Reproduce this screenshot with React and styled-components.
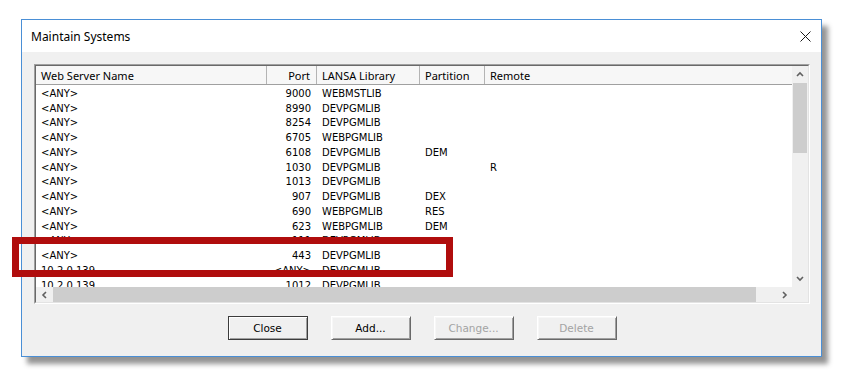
import React from 'react';
import styled, { createGlobalStyle } from 'styled-components';

const LIST_FONT = '"DejaVu Sans", "Liberation Sans", sans-serif';
const UI_FONT = '"Noto Sans", "Open Sans", sans-serif';
const COLUMNS = '231px 50px 103px 65px 1fr';
const ROW_HEIGHT = 14.75;

const GlobalStyle = createGlobalStyle`
  html, body {
    margin: 0;
    background: #ffffff;
  }
  body {
    width: 842px;
    height: 382px;
    overflow: hidden;
  }
`;

const Page = styled.div`
  position: relative;
  box-sizing: border-box;
  width: 842px;
  height: 382px;
  padding: 19px 0 0 21px;
`;

const Window = styled.div`
  box-sizing: border-box;
  width: 801px;
  height: 338px;
  border: 1px solid #4a8fd6;
  background: #f0f0f0;
  box-shadow: 6px 7px 5px rgba(0, 0, 0, 0.42);
  display: flex;
  flex-direction: column;
`;

const TitleBar = styled.div`
  height: 32px;
  flex: none;
  background: #ffffff;
  display: flex;
  align-items: center;
  justify-content: space-between;
  padding: 0 10px 0 9px;
`;

const Title = styled.span`
  font-family: ${UI_FONT};
  font-size: 12px;
  color: #000;
`;

const CloseGlyph = styled.svg`
  width: 11px;
  height: 11px;
  display: block;
`;

const Body = styled.div`
  flex: 1;
  padding: 12px 11px 0 12px;
  display: flex;
  flex-direction: column;
`;

const ListBox = styled.div`
  box-sizing: border-box;
  width: 776px;
  height: 240px;
  border: 1px solid;
  border-color: #a0a0a0 #ffffff #ffffff #a0a0a0;
`;

const ListFrame = styled.div`
  box-sizing: border-box;
  height: 100%;
  border: 1px solid;
  border-color: #696969 #e3e3e3 #e3e3e3 #696969;
  background: #ffffff;
  display: grid;
  grid-template-columns: 1fr 16px;
  grid-template-rows: 1fr 15px;
`;

const Content = styled.div`
  overflow: hidden;
  display: flex;
  flex-direction: column;
`;

const Header = styled.div`
  height: 19px;
  flex: none;
  box-sizing: border-box;
  display: grid;
  grid-template-columns: ${COLUMNS};
  background: #f7f7f7;
  border-bottom: 1px solid #a0a0a0;
`;

const HeaderCell = styled.div`
  display: flex;
  align-items: center;
  justify-content: ${p => (p.right ? 'flex-end' : 'flex-start')};
  padding: 0 ${p => (p.right ? '6px' : '5px')};
  border-right: ${p => (p.last ? 'none' : '1px solid #b4b4b4')};
  font-family: ${UI_FONT};
  font-size: 11px;
  color: #000;
  white-space: nowrap;
`;

const Rows = styled.div`
  padding-top: 1px;
`;

const Row = styled.div`
  height: ${ROW_HEIGHT}px;
  display: grid;
  grid-template-columns: ${COLUMNS};
  align-items: center;
`;

const Cell = styled.div`
  padding: 0 ${p => (p.right ? '6px' : '5px')};
  text-align: ${p => (p.right ? 'right' : 'left')};
  font-family: ${LIST_FONT};
  font-size: 10px;
  color: #000;
  white-space: nowrap;
  overflow: hidden;
`;

const VScroll = styled.div`
  background: #f0f0f0;
  display: flex;
  flex-direction: column;
`;

const HScroll = styled.div`
  background: #f0f0f0;
  display: flex;
  align-items: stretch;
`;

const Corner = styled.div`
  background: #f0f0f0;
`;

const ArrowButton = styled.div`
  flex: none;
  width: ${p => (p.horizontal ? '16px' : '100%')};
  height: ${p => (p.horizontal ? '100%' : '17px')};
  display: flex;
  align-items: center;
  justify-content: center;
`;

const VThumb = styled.div`
  margin: 0 1px;
  height: 70px;
  background: #cdcdcd;
`;

const HThumb = styled.div`
  margin: 0 18px 0 1px;
  width: 703px;
  background: #cdcdcd;
`;

const Spacer = styled.div`
  flex: 1;
`;

const ButtonRow = styled.div`
  display: flex;
  justify-content: center;
  gap: 23px;
  margin-top: 12px;
`;

const Button = styled.div`
  box-sizing: border-box;
  width: 80px;
  height: 24px;
  display: flex;
  align-items: center;
  justify-content: center;
  background: #f0f0f0;
  font-family: ${LIST_FONT};
  font-size: 10.5px;
  color: ${p => (p.disabled ? '#a3a3a3' : '#000')};
  border: 1px solid;
  border-color: ${p => (p.primary ? '#3c3c3c' : '#ffffff #696969 #696969 #ffffff')};
  box-shadow: ${p => (p.primary
    ? 'inset 1px 1px 0 #ffffff, inset -1px -1px 0 #a0a0a0'
    : 'inset 1px 1px 0 #f7f7f7, inset -1px -1px 0 #a0a0a0')};
`;

const Highlight = styled.div`
  position: absolute;
  left: 12px;
  top: 237px;
  width: 441px;
  height: 40px;
  box-sizing: border-box;
  border: 7px solid #b00d0d;
`;

const Chevron = ({ dir }) => {
  const paths = {
    up: 'M1 5 L4 2 L7 5',
    down: 'M1 2 L4 5 L7 2',
    left: 'M5 1 L2 4 L5 7',
    right: 'M2 1 L5 4 L2 7',
  };
  const vertical = dir === 'up' || dir === 'down';
  return (
    <svg width={vertical ? 8 : 7} height={vertical ? 7 : 8} viewBox={vertical ? '0 0 8 7' : '0 0 7 8'}>
      <path d={paths[dir]} fill="none" stroke="#606060" strokeWidth="1.6" />
    </svg>
  );
};

const rows = [
  ['<ANY>', '9000', 'WEBMSTLIB', '', ''],
  ['<ANY>', '8990', 'DEVPGMLIB', '', ''],
  ['<ANY>', '8254', 'DEVPGMLIB', '', ''],
  ['<ANY>', '6705', 'WEBPGMLIB', '', ''],
  ['<ANY>', '6108', 'DEVPGMLIB', 'DEM', ''],
  ['<ANY>', '1030', 'DEVPGMLIB', '', 'R'],
  ['<ANY>', '1013', 'DEVPGMLIB', '', ''],
  ['<ANY>', '907', 'DEVPGMLIB', 'DEX', ''],
  ['<ANY>', '690', 'WEBPGMLIB', 'RES', ''],
  ['<ANY>', '623', 'WEBPGMLIB', 'DEM', ''],
  ['<ANY>', '111', 'DEVPGMLIB', '', ''],
  ['<ANY>', '443', 'DEVPGMLIB', '', ''],
  ['10.2.0.139', '<ANY>', 'DEVPGMLIB', '', ''],
  ['10.2.0.139', '1012', 'DEVPGMLIB', '', ''],
];

const columns = [
  { label: 'Web Server Name' },
  { label: 'Port', right: true },
  { label: 'LANSA Library' },
  { label: 'Partition' },
  { label: 'Remote', last: true },
];

export default function App() {
  return (
    <Page>
      <GlobalStyle />
      <Window>
        <TitleBar>
          <Title>Maintain Systems</Title>
          <CloseGlyph viewBox="0 0 11 11">
            <path d="M0.5 0.5 L10.5 10.5 M10.5 0.5 L0.5 10.5" stroke="#1a1a1a" strokeWidth="1" />
          </CloseGlyph>
        </TitleBar>
        <Body>
          <ListBox>
            <ListFrame>
              <Content>
                <Header>
                  {columns.map(col => (
                    <HeaderCell key={col.label} right={col.right} last={col.last}>
                      {col.label}
                    </HeaderCell>
                  ))}
                </Header>
                <Rows>
                  {rows.map((r, i) => (
                    <Row key={i}>
                      <Cell>{r[0]}</Cell>
                      <Cell right>{r[1]}</Cell>
                      <Cell>{r[2]}</Cell>
                      <Cell>{r[3]}</Cell>
                      <Cell>{r[4]}</Cell>
                    </Row>
                  ))}
                </Rows>
              </Content>
              <VScroll>
                <ArrowButton><Chevron dir="up" /></ArrowButton>
                <VThumb />
                <Spacer />
                <ArrowButton><Chevron dir="down" /></ArrowButton>
              </VScroll>
              <HScroll>
                <ArrowButton horizontal><Chevron dir="left" /></ArrowButton>
                <HThumb />
                <Spacer />
                <ArrowButton horizontal><Chevron dir="right" /></ArrowButton>
              </HScroll>
              <Corner />
            </ListFrame>
          </ListBox>
          <ButtonRow>
            <Button primary>Close</Button>
            <Button>Add...</Button>
            <Button disabled>Change...</Button>
            <Button disabled>Delete</Button>
          </ButtonRow>
        </Body>
      </Window>
      <Highlight />
    </Page>
  );
}
